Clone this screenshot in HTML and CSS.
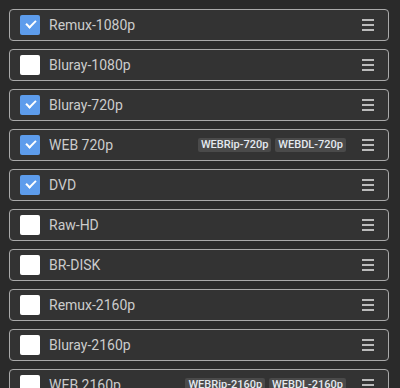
FILE: index.html
```html
<!DOCTYPE html>
<html lang="en">
<head>
    <meta charset="UTF-8">
    <title>Qualities</title>
    <link rel="stylesheet" href="styles.css">
</head>
<body>
    <div class="qualities">
        <div class="quality">
            <span class="check checked"></span>
            <span class="name">Remux-1080p</span>
            <span class="handle"></span>
        </div>
        <div class="quality">
            <span class="check"></span>
            <span class="name">Bluray-1080p</span>
            <span class="handle"></span>
        </div>
        <div class="quality">
            <span class="check checked"></span>
            <span class="name">Bluray-720p</span>
            <span class="handle"></span>
        </div>
        <div class="quality">
            <span class="check checked"></span>
            <span class="name">WEB 720p</span>
            <span class="tags">
                <span class="tag">WEBRip-720p</span>
                <span class="tag">WEBDL-720p</span>
            </span>
            <span class="handle"></span>
        </div>
        <div class="quality">
            <span class="check checked"></span>
            <span class="name">DVD</span>
            <span class="handle"></span>
        </div>
        <div class="quality">
            <span class="check"></span>
            <span class="name">Raw-HD</span>
            <span class="handle"></span>
        </div>
        <div class="quality">
            <span class="check"></span>
            <span class="name">BR-DISK</span>
            <span class="handle"></span>
        </div>
        <div class="quality">
            <span class="check"></span>
            <span class="name">Remux-2160p</span>
            <span class="handle"></span>
        </div>
        <div class="quality">
            <span class="check"></span>
            <span class="name">Bluray-2160p</span>
            <span class="handle"></span>
        </div>
        <div class="quality">
            <span class="check"></span>
            <span class="name">WEB 2160p</span>
            <span class="tags">
                <span class="tag">WEBRip-2160p</span>
                <span class="tag">WEBDL-2160p</span>
            </span>
            <span class="handle"></span>
        </div>
    </div>
</body>
</html>
```

FILE: styles.css
```css
/* General */
body {
    margin: 0;
    background-color: #2a2a2a;
    font-family: Roboto, "Liberation Sans", sans-serif;
    color: #ccc;
    overflow: hidden;
}

.qualities {
    display: flex;
    flex-direction: column;
    gap: 8px;
    padding: 9px 11px 0 9px;
}

/* Quality row */
.quality {
    display: flex;
    align-items: center;
    height: 30px;
    padding: 0 14px 0 10px;
    border: 1px solid #aaa;
    border-radius: 4px;
    background-color: #333;
}

.check {
    flex: none;
    width: 20px;
    height: 20px;
    border-radius: 2px;
    background-color: #fff;
    position: relative;
}

.check.checked {
    background-color: #5d9cec;
}

.check.checked::after {
    content: "";
    position: absolute;
    left: 6px;
    top: 5px;
    width: 8px;
    height: 4px;
    border-left: 2px solid #fff;
    border-bottom: 2px solid #fff;
    transform: rotate(-45deg);
}

.name {
    flex: 1;
    margin-left: 9px;
    font-size: 14px;
}

/* Grouped quality labels */
.tags {
    display: flex;
    gap: 4px;
    margin-right: 16px;
}

.tag {
    height: 14px;
    line-height: 14px;
    padding: 0 3px;
    border-radius: 2px;
    background-color: #4a4a4a;
    color: #e4e9ef;
    font-size: 11px;
    font-weight: 500;
}

/* Drag handle */
.handle {
    flex: none;
    width: 12px;
    height: 2px;
    background-color: #bbb;
    box-shadow: 0 -5px 0 #bbb, 0 5px 0 #bbb;
}
```
